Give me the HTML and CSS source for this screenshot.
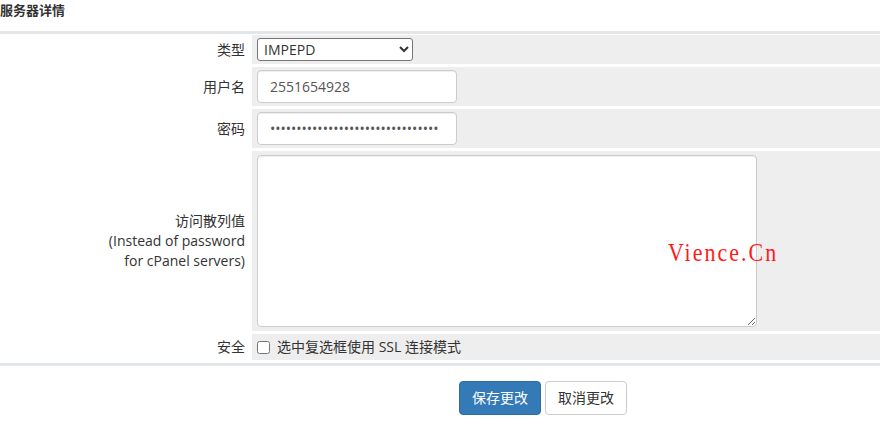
FILE: index.html
```html
<!DOCTYPE html>
<html lang="zh-CN">
<head>
<meta charset="utf-8">
<title>服务器详情</title>
<link rel="stylesheet" href="styles.css">
</head>
<body>
<div class="page">
  <h2 class="title">服务器详情</h2>
  <div class="form-table">
    <div class="label">类型</div>
    <div class="field">
      <select class="type-select">
        <option>IMPEPD</option>
      </select>
    </div>

    <div class="label">用户名</div>
    <div class="field">
      <input class="text-input" type="text" value="2551654928">
    </div>

    <div class="label">密码</div>
    <div class="field">
      <input class="text-input" type="password" value="abcdefghijklmnopqrstuvwxyz123456">
    </div>

    <div class="label">访问散列值<br>(Instead of password<br>for cPanel servers)</div>
    <div class="field field-area">
      <textarea class="hash-area"></textarea>
    </div>

    <div class="label">安全</div>
    <div class="field field-check">
      <label class="check-label"><input type="checkbox" class="check">选中复选框使用 SSL 连接模式</label>
    </div>
  </div>
  <div class="actions">
    <button class="btn btn-primary" type="button">保存更改</button>
    <button class="btn btn-default" type="button">取消更改</button>
  </div>
  <div class="watermark">Vience.Cn</div>
</div>
</body>
</html>
```

FILE: styles.css
```css
html, body {
  margin: 0;
  padding: 0;
  background: #ffffff;
}

body {
  font-family: "Open Sans", "Noto Sans CJK SC", sans-serif;
  font-size: 14px;
  line-height: 20px;
  color: #333333;
}

.page {
  position: relative;
  width: 880px;
  height: 425px;
  overflow: hidden;
}

.title {
  margin: 0 0 11px 0;
  font-size: 13px;
  line-height: 20px;
  font-weight: bold;
  color: #333333;
}

.form-table {
  display: grid;
  grid-template-columns: 249px 1fr;
  column-gap: 3px;
  row-gap: 3px;
  border-top: 3px solid #e3e6e9;
  border-bottom: 3px solid #e3e6e9;
  padding: 1px 0 3px 0;
}

.label {
  display: flex;
  align-items: center;
  justify-content: flex-end;
  text-align: right;
  padding-right: 4px;
  color: #333333;
}

.field {
  background: #eeeeee;
  padding: 3px 5px;
  display: flex;
  align-items: center;
}

.type-select {
  width: 156px;
  height: 23px;
  font-family: "Open Sans", "Noto Sans CJK SC", sans-serif;
  font-size: 14px;
  color: #333333;
  background: #ffffff;
  border: 1px solid #767676;
  border-radius: 3px;
  padding: 0 2px;
  margin: 0;
}

.text-input {
  box-sizing: border-box;
  width: 200px;
  height: 33px;
  padding: 6px 12px;
  font-family: "Open Sans", "Noto Sans CJK SC", sans-serif;
  font-size: 14px;
  color: #555555;
  background: #ffffff;
  border: 1px solid #cccccc;
  border-radius: 4px;
  box-shadow: inset 0 1px 1px rgba(0, 0, 0, 0.075);
  margin: 0;
}

.field-area {
  padding: 4px 5px;
}

.hash-area {
  box-sizing: border-box;
  width: 500px;
  height: 172px;
  margin: 0;
  padding: 6px 12px;
  border: 1px solid #cccccc;
  border-radius: 4px;
  background: #ffffff;
  box-shadow: inset 0 1px 1px rgba(0, 0, 0, 0.075);
  font-family: "Open Sans", "Noto Sans CJK SC", sans-serif;
  font-size: 14px;
}

.check-label {
  display: flex;
  align-items: center;
  color: #333333;
}

.check {
  width: 13px;
  height: 13px;
  margin: 1px 7px 0 0;
}

.actions {
  display: flex;
  gap: 4px;
  margin: 15px 0 0 459px;
}

.btn {
  box-sizing: border-box;
  height: 34px;
  padding: 6px 12px;
  font-family: "Open Sans", "Noto Sans CJK SC", sans-serif;
  font-size: 14px;
  line-height: 20px;
  border: 1px solid transparent;
  border-radius: 4px;
  cursor: pointer;
}

.btn-primary {
  color: #ffffff;
  background: #337ab7;
  border-color: #2e6da4;
}

.btn-default {
  color: #333333;
  background: #ffffff;
  border-color: #cccccc;
}

.watermark {
  position: absolute;
  left: 668px;
  top: 240px;
  font-family: "Liberation Serif", serif;
  font-size: 22px;
  line-height: 24px;
  letter-spacing: 2px;
  color: #ff1a1a;
  transform: scaleY(1.12);
  transform-origin: left top;
}
```
